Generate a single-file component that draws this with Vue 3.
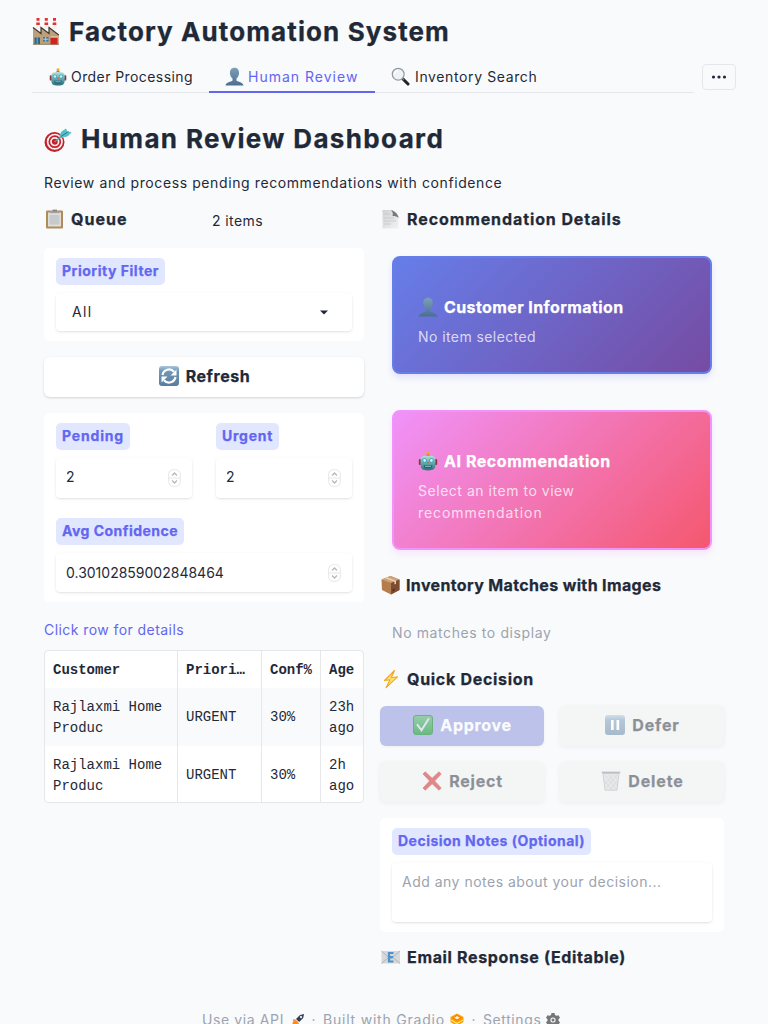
<script setup>
import { ref } from 'vue'

const stats = [
  { key: 'pending', label: 'Pending', value: '2' },
  { key: 'urgent', label: 'Urgent', value: '2' },
  { key: 'avg', label: 'Avg Confidence', value: '0.30102859002848464' }
]
const rows = ref([
  { customer: 'Rajlaxmi Home Produc', priority: 'URGENT', conf: '30%', age: '23h ago' },
  { customer: 'Rajlaxmi Home Produc', priority: 'URGENT', conf: '30%', age: '2h ago' }
])
</script>

<template>
  <div class="app">
    <svg class="defs" width="0" height="0" aria-hidden="true">
      <defs>
        <linearGradient id="gPerson" x1="0" y1="0" x2="0" y2="1">
          <stop offset="0" stop-color="#7c9fb9" /><stop offset="1" stop-color="#4b6f93" />
        </linearGradient>
        <linearGradient id="gBot" x1="0" y1="0" x2="0" y2="1">
          <stop offset="0" stop-color="#b5dfdc" /><stop offset=".5" stop-color="#63aab2" /><stop offset="1" stop-color="#2e6f7f" />
        </linearGradient>
        <linearGradient id="gBlue" x1="0" y1="0" x2="0" y2="1">
          <stop offset="0" stop-color="#a9c5da" /><stop offset=".25" stop-color="#7297b6" /><stop offset="1" stop-color="#577c9e" />
        </linearGradient>
        <linearGradient id="gGreen" x1="0" y1="0" x2="0" y2="1">
          <stop offset="0" stop-color="#78d878" /><stop offset="1" stop-color="#28b428" />
        </linearGradient>
        <linearGradient id="gPaper" x1="0" y1="0" x2="1" y2="1">
          <stop offset="0" stop-color="#d2d2d2" /><stop offset="1" stop-color="#f2f2f2" />
        </linearGradient>
        <symbol id="person" viewBox="0 0 20 20">
          <path fill="url(#gPerson)" d="M10 .8c3.2 0 4.9 2.3 4.8 5.5-.1 2.500-1.200 4.700-2.700 5.700v2.200c0 1 6.600 1.500 7.400 5.200H.5c.8-3.700 7.400-4.200 7.400-5.200V12C6.400 11 5.300 8.800 5.200 6.300 5.100 3.100 6.800.8 10 .8z" />
        </symbol>
        <symbol id="bot" viewBox="0 0 20 20">
          <rect x="0.800" y="8" width="2.500" height="6" rx="1" fill="#8b3842" />
          <rect x="16.700" y="8" width="2.500" height="6" rx="1" fill="#8b3842" />
          <path d="M10 1v3" stroke="#d88b25" stroke-width="2" /><circle cx="10" cy="1.900" r="1.700" fill="#efaa2a" />
          <path d="M7.500 5.200c0-2 5-2 5 0" fill="#c14e35" />
          <path fill="url(#gBot)" d="M2.600 8.500c0-3 2-4 7.400-4s7.400 1 7.400 4v5.300c0 4-1.800 5.700-7.400 5.700s-7.400-1.700-7.400-5.700z" />
          <circle cx="6.600" cy="9.500" r="2.300" fill="#4b9faa" /><circle cx="6.600" cy="9.500" r="1.400" fill="#b9fbff" />
          <circle cx="13.400" cy="9.500" r="2.300" fill="#4b9faa" /><circle cx="13.400" cy="9.500" r="1.400" fill="#b9fbff" />
          <path d="M10 10.300l1 2H9z" fill="#e44c3f" />
          <path d="M5.500 14.200h9l-1.200 3H6.700z" fill="#285e6c" /><path d="M7 15.300h6" stroke="#9cd2d4" stroke-width=".9" />
        </symbol>
      </defs>
    </svg>

    <h1 class="title">
      <svg class="ic28" viewBox="0 0 28 28">
        <path d="M4.500 2h3l.7 10H3.800zM12.800 2h3l.7 10h-4.400zM21 2h3l.7 10h-4.400z" fill="#f4f1ee" />
        <path d="M4.500 1h3v2.700h-3zM4.300 5.500h3.500V8H4.200zM12.800 1h3v2.700h-3zM12.600 5.500h3.500V8h-3.600zM21 1h3v2.700h-3zM20.800 5.500h3.500V8h-3.600z" fill="#e4312f" />
        <path d="M1 10.500l8 6v-6l8 6v-6l8 6 1.800 1V27.500H1z" fill="#bba07a" />
        <path d="M1 10.500l8 6v-6l8 6v-6l9.800 7.500" fill="none" stroke="#3f3932" stroke-width="1.200" />
        <path d="M1 27.300h26" stroke="#8e8272" stroke-width="1" />
        <path d="M2.500 20.500h5.500V27H2.500z" fill="#2f668a" /><path d="M5.200 20.500V27" stroke="#a9bdc6" stroke-width=".8" />
        <path d="M11 20h5.500v4.500H11z" fill="#377aa3" /><path d="M13.700 20v4.500M11 22.200h5.500" stroke="#d2d4ca" stroke-width=".9" />
        <path d="M18.500 20.500h7v6.800h-7z" fill="#d42020" /><path d="M18.500 20h7.500" stroke="#f1ece4" stroke-width=".8" />
      </svg>
      <span>Factory Automation System</span>
    </h1>

    <nav class="nav">
      <div class="tabs">
        <a class="tab t-order"><svg class="ic18"><use href="#bot" /></svg><span>Order Processing</span></a>
        <a class="tab t-human active"><svg class="ic19"><use href="#person" /></svg><span>Human Review</span></a>
        <a class="tab t-inv">
          <svg class="ic19" viewBox="0 0 19 19">
            <path d="M12 12l5 5" stroke="#222" stroke-width="3" stroke-linecap="round" /><path d="M11 11l2 2" stroke="#777" stroke-width="1.500" />
            <circle cx="7.200" cy="7.200" r="5.900" fill="#edf3f6" stroke="#95999e" stroke-width="1.200" /><path d="M3.800 6.500a3.500 3.500 0 0 1 3-3" stroke="#fff" stroke-width="1.300" fill="none" />
          </svg>
          <span>Inventory Search</span>
        </a>
      </div>
      <button class="more"><svg width="16" height="4" viewBox="0 0 16 4" fill="#1f2937"><circle cx="2.500" cy="2" r="1.600" /><circle cx="8" cy="2" r="1.600" /><circle cx="13.500" cy="2" r="1.600" /></svg></button>
    </nav>

    <section class="intro">
      <h2>
        <svg class="ic28" viewBox="0 0 28 28">
          <circle cx="10.500" cy="17" r="10" fill="#c3202b" /><circle cx="10.800" cy="16.700" r="7.200" fill="none" stroke="#f8eeee" stroke-width="1.700" /><circle cx="10.800" cy="16.700" r="3.800" fill="none" stroke="#f8eeee" stroke-width="1.700" />
          <path d="M10.500 17l8-6.500" stroke="#6d9999" stroke-width="1.500" />
          <path d="M16 11.500L17.500 7 22 4l.5 3 4.500.5-3.500 3.500-4.500.8-1.500 1.200z" fill="#57bec8" stroke="#57bec8" /><path d="M17 11.500l7.500-5" stroke="#247d8a" stroke-width="1" />
        </svg>
        <span>Human Review Dashboard</span>
      </h2>
      <p>Review and process pending recommendations with confidence</p>
    </section>

    <main class="columns">
      <section class="left">
        <div class="queue">
          <h3 class="l-queue">
            <svg class="ic20" viewBox="0 0 20 20"><rect x="2" y="1.500" width="17" height="18" rx="1" fill="#b18b57" /><path d="M4 3.500h13v14H4z" fill="#dedede" /><path d="M5.500 6H15.500v9.500h-10z" fill="#c8c9ca" /><path d="M6 2h9v2.200H6z" fill="#a1a4a6" /><path d="M8.500.6h4.500v2H8.500z" fill="#888" /></svg>
            <span>Queue</span>
          </h3>
          <span class="count">2 items</span>
        </div>

        <div class="panel filter">
          <label class="tag l-filter">Priority Filter</label>
          <div class="field select"><span>All</span><svg width="8" height="5" viewBox="0 0 8 5"><path d="M0 .5h8L4 4.500z" fill="#1f2937" /></svg></div>
        </div>

        <button class="btn refresh">
          <svg class="ic20" viewBox="0 0 20 20"><rect width="20" height="20" rx="3" fill="url(#gBlue)" /><path d="M3.500 9a6.600 6.600 0 0 1 11.500-3.300M16.500 11A6.600 6.600 0 0 1 5 14.300" fill="none" stroke="#fff" stroke-width="2.200" /><path d="M17.500 3.500v6h-6zM2.500 16.500v-6h6z" fill="#fff" /></svg>
          <span>Refresh</span>
        </button>

        <div class="panel stats">
          <div v-for="s in stats" :key="s.key" class="stat" :class="s.key">
            <label class="tag">{{ s.label }}</label>
            <div class="field number">
              <span>{{ s.value }}</span>
              <svg width="13" height="18" viewBox="0 0 13 18" fill="none"><rect x=".7" y=".7" width="11.600" height="16.600" rx="4.500" stroke="#e6e6e6" /><path d="M1 9h11" stroke="#e6e6e6" /><path d="M4 6.500L6.500 4 9 6.500M4 11.500L6.500 14 9 11.500" stroke="#b8b8b8" stroke-width="1.300" /></svg>
            </div>
          </div>
        </div>

        <p class="hint">Click row for details</p>
        <div class="table">
          <table>
            <colgroup><col class="c1" /><col class="c2" /><col class="c3" /><col class="c4" /></colgroup>
            <thead><tr><th>Customer</th><th>Priori…</th><th>Conf%</th><th>Age</th></tr></thead>
            <tbody>
              <tr v-for="(r, i) in rows" :key="i"><td>{{ r.customer }}</td><td>{{ r.priority }}</td><td>{{ r.conf }}</td><td>{{ r.age }}</td></tr>
            </tbody>
          </table>
        </div>
      </section>

      <section class="right">
        <h3 class="l-rec">
          <svg class="ic20" viewBox="0 0 20 20"><path d="M2.500 1H11l7.500 7V19.500h-16z" fill="url(#gPaper)" /><path d="M11 1c3 .5 7.500 4 7.500 8-1.500-1.500-3-2-6-2 .8-2 .3-4-1.500-6z" fill="#77797b" /><path d="M4 5h6M4 9h10M4 12h12M4 15h7" stroke="#c5c6c7" stroke-width=".8" /></svg>
          <span>Recommendation Details</span>
        </h3>
        <article class="card customer">
          <h4><svg class="ic20"><use href="#person" /></svg><span>Customer Information</span></h4>
          <p>No item selected</p>
        </article>
        <article class="card ai">
          <h4><svg class="ic20"><use href="#bot" /></svg><span>AI Recommendation</span></h4>
          <p>Select an item to view<br /><span class="second">recommendation</span></p>
        </article>
        <h3 class="l-match">
          <svg class="ic20" viewBox="0 0 20 20"><path d="M1.500 4.500l9-3.500 9 3.500V15L11 19.500 2 15z" fill="#b57c4d" /><path d="M1.500 4.500l9-3.500 9 3.500L11 8z" fill="#cfa176" /><path d="M11 8l8.500-3.500V15L11 19.500z" fill="#7c4d31" /><path d="M5 3.200L14.500 6.500v3l1.500-.8v-3L7 2.400z" fill="#ead7bd" /><path d="M12.500 14.500l2-1v2l-2 1z" fill="#4b3023" /></svg>
          <span>Inventory Matches with Images</span>
        </h3>
        <p class="empty">No matches to display</p>
        <h3 class="l-quick">
          <svg class="ic20" viewBox="0 0 20 20"><path d="M14.500 1.500L4.500 11.500l5.500-.8-4 8L17.500 7.800l-6.300 1z" fill="#ffe36e" stroke="#f2a51f" stroke-width="1.100" stroke-linejoin="round" /></svg>
          <span>Quick Decision</span>
        </h3>
        <div class="actions">
          <button class="btn approve"><svg class="ic20" viewBox="0 0 20 20"><rect x=".5" y=".5" width="19" height="19" rx="2.500" fill="url(#gGreen)" stroke="#2ba42b" /><path d="M4.500 9.800l4 5.500L15.500 4" fill="none" stroke="#fff" stroke-width="2" stroke-linecap="round" /></svg><span>Approve</span></button>
          <button class="btn defer"><svg class="ic20" viewBox="0 0 20 20"><rect width="20" height="20" rx="3" fill="url(#gBlue)" /><path d="M6 5h2.700v10H6zM11.500 5h2.700v10h-2.700z" fill="#fff" /></svg><span>Defer</span></button>
          <button class="btn reject"><svg class="ic20" viewBox="0 0 20 20"><path d="M3.200.8l6.900 6.500L17 .8 19.200 3l-6.600 7 6.600 7-2.200 2.200-6.900-6.500-6.900 6.500L1 17l6.600-7L1 3z" fill="#c91919" stroke="#c91919" stroke-width=".8" /></svg><span>Reject</span></button>
          <button class="btn delete"><svg class="ic20" viewBox="0 0 20 20" fill="none"><path d="M2 2.500l2 16.700h12L18 2.500z" fill="#d4d7d9" stroke="#9ba0a5" stroke-width=".8" /><path d="M4 4l11 14M8 4l8 10M13 4l3 4M3 9l8 10M16 4L5 17M12 4L4 13M17 9L9 19" stroke="#a8abad" stroke-width=".5" /><path d="M.8 1.500h18.400" stroke="#80868c" stroke-width="1.700" /></svg><span>Delete</span></button>
        </div>
        <div class="panel notes">
          <label class="tag l-notes">Decision Notes (Optional)</label>
          <div class="field area">Add any notes about your decision...</div>
        </div>
        <h3 class="l-email">
          <svg class="ic20" viewBox="0 0 20 20"><path d="M1.500 4h18.500v12.500H1.500z" fill="#d7d8da" /><path d="M1.500 4l9 8L20 4M1.500 16.500l7-6M20 16.500l-7-6" stroke="#aaa" fill="none" stroke-width=".8" /><path d="M13.500 6h-4.500v8.500h4.500M9 10.200h4" fill="none" stroke="#4d92cf" stroke-width="2.200" /></svg>
          <span>Email Response (Editable)</span>
        </h3>
      </section>
    </main>

    <footer class="footer">
      <span class="f-api">Use via API</span>
      <svg class="rocket" viewBox="0 0 14 14"><path d="M5 6l4-4 4-1-.8 4-4 4z" fill="#303d50" /><circle cx="10" cy="4" r="1.200" fill="#dce5ea" /><path d="M4.500 6.500l3 3-2 3L1 13l.8-4z" fill="#ff8a17" /><path d="M4 6L1.500 7 3 8zM8 10l-.7 2.500L6 11z" fill="#f05e16" /></svg>
      <i>·</i>
      <span class="f-built">Built with Gradio</span>
      <svg class="gradio" viewBox="0 0 14 14"><path d="M7 .5L13.500 4v5L7 12.800.5 9V4z" fill="#ff9c00" /><path d="M7 2.500L11 4.800 7 7 3 4.800z" fill="#fff3c2" stroke="#f97300" /><path d="M1 7l6 3.500L13 7" fill="none" stroke="#ffe66e" stroke-width="1.300" /></svg>
      <i>·</i>
      <span class="f-set">Settings</span>
      <svg class="gear" viewBox="0 0 14 14"><path d="M5.500 0h3l.5 2 1.500.8 2-.6L14 4.800l-1.500 1.500v1.400L14 9.200l-1.500 2.600-2-.6L9 12l-.5 2h-3L5 12l-1.500-.8-2 .6L0 9.200l1.500-1.500V6.300L0 4.800l1.500-2.600 2 .6L5 2z" fill="#777" /><circle cx="7" cy="7" r="2.600" fill="#f9fafb" /><circle cx="7" cy="7" r="1.500" fill="#777" /></svg>
    </footer>
  </div>
</template>

<style>
body { background: #f9fafc; }
</style>

<style scoped>
* { box-sizing: border-box; }
.app { width: 768px; height: 1024px; overflow: hidden; padding: 0 32px; background: #f9fafc; color: #1f2937; font: 14px/21px Inter, "Open Sans", sans-serif; }
.defs { display: block; position: absolute; }
h1, h2, h3, h4, p { margin: 0; }
h1, h2, h3, h4, .btn, .tag { -webkit-text-stroke: .25px currentColor; }
span { white-space: nowrap; }
svg { flex: none; }
button { font: inherit; color: inherit; border: 0; padding: 0; }
.ic28 { width: 28px; height: 28px; }
.ic20 { width: 20px; height: 20px; }
.ic19 { width: 19px; height: 19px; }
.ic18 { width: 18px; height: 18px; }

.title, h2 { display: flex; align-items: center; gap: 9px; font-size: 26px; line-height: 34px; font-weight: 700; }
.title { height: 34px; margin-top: 15px; letter-spacing: 1.1px; }
.title svg { margin-top: -3px; }
.nav { display: flex; gap: 8px; height: 44px; }
.tabs { flex: 1; display: flex; height: 44px; border-bottom: 1px solid #e5e7eb; }
.tab { display: flex; align-items: center; gap: 4px; height: 44px; padding-top: 13px; padding-bottom: 0; border-bottom: 2px solid transparent; }
.t-order { width: 177px; padding-left: 17px; letter-spacing: .42px; }
.t-human { width: 166px; padding-left: 16px; letter-spacing: 1px; }
.t-inv { padding-left: 16px; gap: 5px; letter-spacing: .62px; }
.tab.active { color: #6366f1; border-color: #6366f1; }
.more { width: 34px; height: 26px; margin-top: 15px; border: 1px solid #e5e7eb; border-radius: 4px; background: #f9fafc; display: flex; align-items: center; justify-content: center; }

.intro { padding: 29px 12px 0; height: 111px; }
.intro h2 { letter-spacing: 1.36px; }
.intro p { margin-top: 16px; height: 21px; letter-spacing: .6px; }

.columns { display: grid; grid-template-columns: 320px 344px; gap: 16px; padding: 0 12px; height: 801px; }
.left, .right { display: flex; flex-direction: column; }
h3 { display: flex; align-items: center; gap: 7px; font-size: 16px; line-height: 24px; height: 24px; font-weight: 700; }
.queue { display: grid; grid-template-columns: 168px 1fr; height: 44px; align-items: start; padding-top: 3px; }
.l-queue { letter-spacing: 1px; }
.count { padding-top: 3px; letter-spacing: .4px; }
.panel { background: #fff; border-radius: 5px; }
.filter { height: 93px; padding: 10px 12px; }
.tag { display: block; width: max-content; height: 27px; padding: 0 6px; border-radius: 5px; background: #e0e7ff; color: #6366f1; font-weight: 700; line-height: 26px; }
.l-filter { letter-spacing: .53px; }
.field { background: #fff; border-radius: 4px; box-shadow: 0 1px 3px rgba(0, 0, 0, .1), 0 1px 2px -1px rgba(0, 0, 0, .08); }
.select { display: flex; align-items: center; justify-content: space-between; height: 38px; margin-top: 8px; padding: 0 24px 1px 16px; letter-spacing: 1.3px; }
.select svg { margin-top: 2px; }
.btn { display: flex; align-items: center; justify-content: center; gap: 7px; height: 40px; padding-bottom: 2px; border-radius: 6px; font-size: 16px; font-weight: 700; box-shadow: 0 1px 3px rgba(0, 0, 0, .1), 0 1px 2px rgba(0, 0, 0, .06); }
.refresh { margin-top: 16px; padding-left: 1px; background: #fff; letter-spacing: .55px; }
.stats { display: grid; grid-template-columns: 136px 136px; grid-template-rows: 75px 74px; column-gap: 24px; row-gap: 20px; margin-top: 16px; padding: 10px 12px 9px; height: 189px; }
.number { display: flex; align-items: center; justify-content: space-between; height: 40px; margin-top: 8px; padding: 0 11px 3px 10px; }
.number svg { margin-top: 3px; }
.pending .tag { letter-spacing: .83px; }
.urgent .tag { letter-spacing: .73px; }
.avg { grid-column: 1 / 3; }
.avg .tag { letter-spacing: .47px; }
.avg .number { height: 39px; padding-bottom: 1px; }
.avg .number svg { margin-top: 1px; }
.hint { margin-top: 17px; height: 31px; color: #6366f1; letter-spacing: .43px; }
.table { height: 153px; border: 1px solid #e5e7eb; border-radius: 4px; overflow: hidden; background: #fff; }
table { width: 318px; table-layout: fixed; border-collapse: separate; border-spacing: 0; font-family: "Liberation Mono", "DejaVu Sans Mono", monospace; }
.c1 { width: 133px; } .c2 { width: 84px; } .c3 { width: 59px; } .c4 { width: 42px; }
th, td { padding: 1px 0 0 8px; text-align: left; vertical-align: middle; border-right: 1px solid #e5e7eb; }
th { height: 37px; white-space: nowrap; }
td { height: 58px; }
th:last-child, td:last-child { border-right: 0; }
tbody tr:first-child { background: #f9fafb; }

.right .l-rec { margin-top: 3px; letter-spacing: .9px; }
.card { width: 320px; margin-left: 12px; border: 2px solid; border-radius: 8px; padding-left: 24px; color: #fff; }
.card h4 { display: flex; align-items: center; gap: 6px; font-size: 16px; line-height: 24px; font-weight: 700; }
.card p { margin-top: 7px; line-height: 22px; color: rgba(255, 255, 255, .75); }
.customer { height: 118px; margin-top: 25px; padding-top: 37px; border-color: #667eea; background: linear-gradient(135deg, #667eea, #764ba2) border-box; box-shadow: 0 4px 6px rgba(99, 102, 241, .15); }
.customer h4 { letter-spacing: .4px; } .customer p { letter-spacing: .42px; }
.ai { height: 140px; margin-top: 36px; padding-top: 37px; border-color: #f093fb; background: linear-gradient(135deg, #f093fb, #f5576c) border-box; box-shadow: 0 4px 6px rgba(240, 147, 251, .18); }
.ai h4 { letter-spacing: .55px; } .ai p { letter-spacing: .53px; } .ai .second { letter-spacing: .93px; }
.right .l-match { margin-top: 23px; gap: 6px; letter-spacing: .36px; }
.empty { margin: 25px 0 0 12px; height: 21px; color: #9ca3af; letter-spacing: .6px; }
.right .l-quick { margin-top: 24px; letter-spacing: .7px; }
.actions { display: grid; grid-template-columns: 164px 164px; gap: 16px; margin-top: 15px; }
.actions .btn { opacity: .5; background: #f0f2ef; color: #1f2937; box-shadow: 0 1px 4px rgba(0, 0, 0, .1); }
.actions .approve { opacity: 1; background: #bcc2e9; color: #fafbff; letter-spacing: .68px; box-shadow: 0 1px 3px rgba(0, 0, 0, .05); }
.actions .btn { padding-left: 1px; }
.approve svg { opacity: .55; }
.defer { letter-spacing: .85px; } .reject { letter-spacing: .75px; } .delete { letter-spacing: .88px; }
.notes { height: 114px; margin-top: 16px; padding: 10px 12px; }
.l-notes { letter-spacing: .48px; }
.area { height: 59px; margin-top: 8px; padding: 8px 10px; color: #9ca3af; letter-spacing: .49px; }
.right .l-email { margin-top: 13px; letter-spacing: .66px; }

.footer { display: flex; align-items: center; height: 21px; margin-left: 170px; margin-top: 4px; color: #9ca3af; }
.footer i { width: 5px; font-style: normal; text-align: center; margin: 0 7px 0 6px; }
.f-api { width: 89px; letter-spacing: .61px; } .f-built { width: 127px; letter-spacing: .79px; } .f-set { width: 63px; letter-spacing: .6px; }
.footer svg { width: 14px; height: 14px; }
.footer .gradio { margin-right: 1px; }
</style>
